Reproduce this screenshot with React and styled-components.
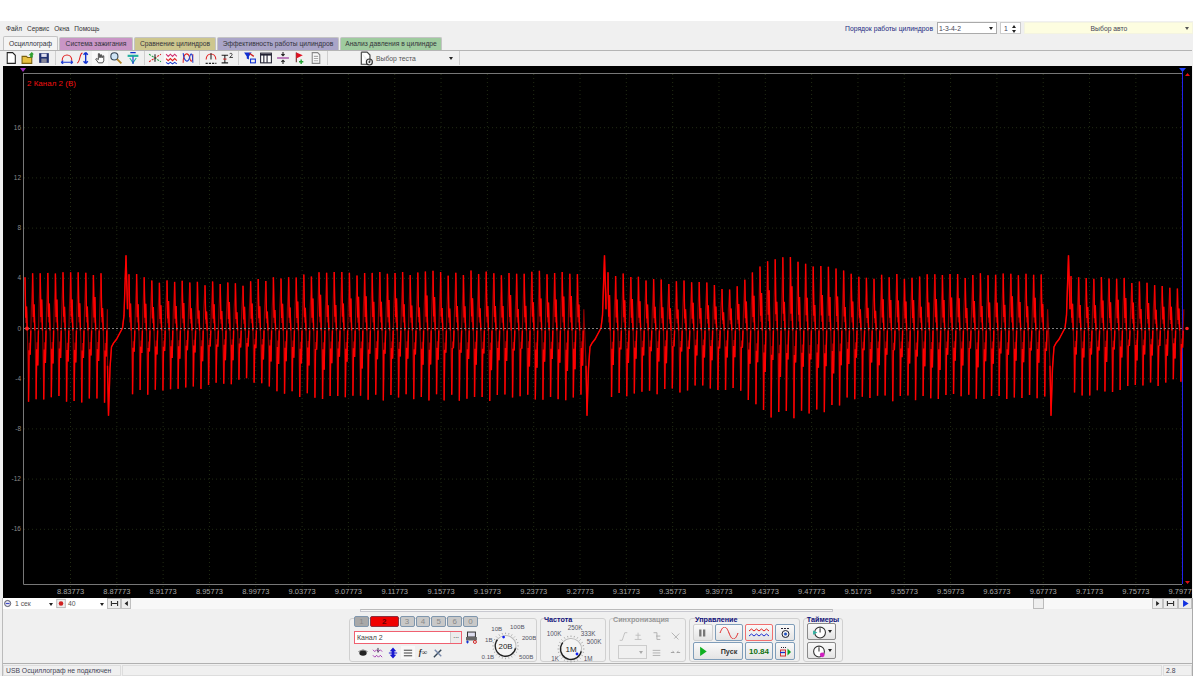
import styled, { createGlobalStyle } from "styled-components";

const GlobalStyle = createGlobalStyle`
  html, body { margin: 0; padding: 0; background: #fff; }
  body { font-family: "Liberation Sans", Arial, sans-serif; font-size: 6.8px; color: #222; overflow: hidden; }
`;

const Shell = styled.div`
  width: 1193px;
  height: 655px;
  margin-top: 21px;
  background: #f0f0f0;
  display: flex;
  flex-direction: column;
`;

const MenuRow = styled.div`
  height: 15px;
  display: flex;
  align-items: center;
  padding-left: 6px;
  gap: 5px;
`;

const MenuItem = styled.span`
  color: #333;
  font-size: 6.5px;
`;

const RightTools = styled.div`
  margin-left: auto;
  display: flex;
  align-items: center;
  gap: 3px;
  height: 13px;
`;

const OrderLabel = styled.span`
  color: #1a2a80;
  font-size: 6.8px;
  margin-right: 1px;
`;

const FieldBox = styled.div`
  width: ${(p) => p.$w}px;
  height: ${(p) => p.$h || 12}px;
  box-sizing: border-box;
  background: ${(p) => p.$bg || "#fff"};
  border: 1px solid ${(p) => p.$line || "#aaa"};
  display: flex;
  align-items: center;
  justify-content: ${(p) => (p.$center ? "center" : "flex-start")};
  position: relative;
  padding-left: 1px;
  font-size: 6.8px;
  color: #445;
`;

const DropArrow = styled.i`
  position: absolute;
  right: 3px;
  top: 50%;
  margin-top: -1px;
  border-left: 2px solid transparent;
  border-right: 2px solid transparent;
  border-top: 3px solid ${(p) => p.$c || "#222"};
`;

const SpinArrows = styled.i`
  position: absolute;
  right: 4px;
  top: 2px;
  width: 0;
  height: 0;
  border-left: 2px solid transparent;
  border-right: 2px solid transparent;
  border-bottom: 3px solid #222;
  &::after {
    content: "";
    position: absolute;
    left: -2px;
    top: 5px;
    border-left: 2px solid transparent;
    border-right: 2px solid transparent;
    border-top: 3px solid #222;
  }
`;

const TabRow = styled.div`
  height: 14px;
  display: flex;
  padding-left: 3px;
  align-items: flex-end;
`;

const Tab = styled.div`
  width: ${(p) => p.$w}px;
  height: ${(p) => (p.$active ? 14 : 13)}px;
  box-sizing: border-box;
  background: ${(p) => p.$bg};
  border: 1px solid #c4c4c4;
  border-bottom: 0;
  border-radius: 2px 2px 0 0;
  margin-right: 1px;
  display: flex;
  align-items: center;
  justify-content: center;
  color: #33333a;
  font-size: 6.7px;
  white-space: nowrap;
`;

const ToolRow = styled.div`
  height: 16px;
  border-top: 1px solid #b4b4b4;
  display: flex;
  align-items: center;
  padding-left: 3px;
  width: 1189px;
`;

const ToolBtn = styled.div`
  width: 16.5px;
  height: 15px;
  display: flex;
  align-items: center;
  justify-content: center;
  flex: none;
  background: ${(p) => (p.$on ? "#f9f9f9" : "transparent")};
`;

const ToolSep = styled.div`
  width: 1px;
  height: 14px;
  background: #cfcfcf;
  margin: 0 2.5px;
  flex: none;
`;

const TestPick = styled.div`
  width: 126px;
  display: flex;
  align-items: center;
  position: relative;
  padding-left: 29px;
  box-sizing: border-box;
  color: #555;
  font-size: 6.8px;
  gap: 2px;
`;

const ChartWrap = styled.div`
  margin-left: 3px;
  width: 1189px;
  height: 532px;
  background: #000;
  flex: none;
  svg { display: block; }
`;

const Lower = styled.div`
  margin-left: 2px;
  width: 1191px;
  box-sizing: border-box;
  border-left: 1px solid #bbb;
  border-right: 1px solid #aaa;
  display: flex;
  flex-direction: column;
  flex: 1;
`;

const ScrollRow = styled.div`
  height: 11px;
  display: flex;
  background: #f8f8f8;
  align-items: stretch;
`;

const TimeField = styled.div`
  width: ${(p) => p.$w}px;
  background: #fff;
  display: flex;
  align-items: center;
  gap: 2px;
  position: relative;
  font-size: 6.8px;
  color: #555;
  flex: none;
`;

const ScrollBtn = styled.div`
  width: ${(p) => p.$w}px;
  flex: none;
  background: #ececec;
  border: 1px solid #c0c0c0;
  box-sizing: border-box;
  display: flex;
  align-items: center;
  justify-content: center;
`;

const ScrollTrack = styled.div`
  flex: 1;
  display: flex;
  justify-content: flex-end;
  padding-right: 108px;
`;

const ScrollThumb = styled.div`
  width: 11px;
  height: 11px;
  background: #eee;
  border: 1px solid #bbb;
  box-sizing: border-box;
`;

const ControlArea = styled.div`
  height: 54px;
  border-bottom: 1px solid #b0b0b0;
  padding-left: 346px;
  display: flex;
  flex-direction: column;
`;

const MiniTrack = styled.div`
  width: 473px;
  height: 3px;
  margin-left: 11px;
  background: #f7f7f7;
  border: 1px solid #c8c8d0;
  border-top: 1px solid #bbb;
  box-sizing: border-box;
  flex: none;
`;

const Groups = styled.div`
  margin-top: 6px;
  display: flex;
  gap: 3px;
  align-items: flex-start;
`;

const Group = styled.div`
  width: ${(p) => p.$w}px;
  height: 44px;
  box-sizing: border-box;
  border: 1px solid #d0d0d0;
  border-radius: 3px;
  flex: none;
  padding: ${(p) => p.$pad || "0 2px"};
  position: relative;
`;

const GroupTitle = styled.div`
  color: ${(p) => (p.$off ? "#999" : "#10107a")};
  font-weight: bold;
  font-size: 7.2px;
  height: 7px;
  line-height: 7px;
  margin-top: -3px;
  margin-left: ${(p) => p.$indent || 0}px;
  white-space: nowrap;
  text-align: ${(p) => (p.$mid ? "center" : "left")};
`;

const ChannelLayout = styled.div`
  display: flex;
  gap: 2px;
`;

const ChannelLeft = styled.div`
  width: 124px;
  display: flex;
  flex-direction: column;
  margin-left: 4px;
`;

const ChannelTabs = styled.div`
  display: flex;
  margin-top: -3px;
  gap: 1px;
`;

const ChTab = styled.div`
  width: ${(p) => p.$w || 15}px;
  height: 11px;
  box-sizing: border-box;
  border: 1px solid ${(p) => (p.$active ? "#8a3040" : "#7f96ad")};
  border-radius: 2px;
  background: ${(p) => (p.$active ? "#f00000" : p.$first ? "#a8a8a8" : "#c8c8c8")};
  color: ${(p) => (p.$active ? "#600" : "#888")};
  font-size: 8px;
  font-weight: ${(p) => (p.$active ? "bold" : "normal")};
  display: flex;
  align-items: center;
  justify-content: center;
`;

const ChannelName = styled.div`
  display: flex;
  align-items: center;
  margin-top: 4px;
  gap: 3px;
`;

const NameField = styled.div`
  width: 109px;
  height: 13px;
  box-sizing: border-box;
  background: #fff;
  border: 1px solid #f06070;
  display: flex;
  align-items: center;
  justify-content: space-between;
  padding-left: 2px;
  color: #444;
  font-size: 7px;
`;

const DotsBtn = styled.span`
  width: 10px;
  height: 11px;
  background: #ececec;
  border-left: 1px solid #ccc;
  text-align: center;
  line-height: 8px;
  color: #222;
`;

const IconRow = styled.div`
  display: flex;
  margin-top: 2px;
  margin-left: 2px;
  gap: 1px;
`;

const IconCell = styled.div`
  width: 14px;
  height: 13px;
  display: flex;
  align-items: center;
  justify-content: center;
  background: ${(p) => (p.$on ? "#f8f8f8" : "transparent")};
`;

const FxMark = styled.b`
  font-style: italic;
  font-family: "Liberation Serif", serif;
  font-size: 8px;
`;

const SyncGrid = styled.div`
  display: grid;
  grid-template-columns: 15px 15px 20px 18px;
  grid-auto-rows: 16px;
  align-items: center;
  justify-items: center;
  margin: 5px 0 0 3px;
`;

const SyncSelect = styled.div`
  grid-column: span 2;
  justify-self: start;
  margin-left: 2px;
  width: 29px;
  height: 14px;
  box-sizing: border-box;
  border: 1px solid #ccc;
  position: relative;
`;

const CtrlGrid = styled.div`
  display: grid;
  grid-template-columns: 20px 28px 28px 20px;
  grid-template-rows: 17px 18px;
  column-gap: 2px;
  row-gap: 1px;
  margin: 1px 0 0 1px;
`;

const PushBtn = styled.div`
  box-sizing: border-box;
  border: 1px solid ${(p) => p.$line || "#7f9db9"};
  border-radius: 2px;
  background: linear-gradient(#fafafa, #e4e4e4);
  display: flex;
  align-items: center;
  justify-content: center;
  grid-column: ${(p) => (p.$span ? `span ${p.$span}` : "auto")};
  font-weight: bold;
  font-size: ${(p) => p.$fs || 7.2}px;
  color: ${(p) => p.$c || "#333"};
  gap: ${(p) => p.$gap || 0}px;
`;

const TimerStack = styled.div`
  display: flex;
  flex-direction: column;
  gap: 2px;
  margin: 0 0 0 3px;
`;

const TimerBtn = styled(PushBtn)`
  width: 29px;
  height: 17px;
  gap: 2px;
  border-color: #8a8a8a;
`;

const TimerArrow = styled.i`
  border-left: 2px solid transparent;
  border-right: 2px solid transparent;
  border-top: 3px solid #222;
`;

const StatusBar = styled.div`
  height: 11px;
  display: flex;
  margin-top: 1px;
  gap: 1px;
  font-size: 6.8px;
  color: #445;
`;

const StatusCell = styled.div`
  width: ${(p) => p.$w}px;
  flex: ${(p) => (p.$w ? "none" : 1)};
  border: 1px solid #ddd;
  box-sizing: border-box;
  display: flex;
  align-items: center;
  padding-left: 2px;
`;

// --- waveform ---
const topEnv = [[23,4.3],[105,4.3],[130,4.3],[160,3.7],[200,3.6],[240,3.5],[270,4],[300,4.3],[400,4.4],[590,4.4],[610,4.4],[650,3.8],[700,3.6],[735,3.1],[750,4.2],[770,5.4],[800,5.5],[830,4.8],[860,4.1],[950,4.2],[1060,4.4],[1075,4.3],[1130,3.8],[1182,3]];
const botEnv = [[23,-5.7],[105,-5.8],[130,-5.3],[160,-5],[200,-4.7],[240,-4.2],[270,-4.8],[300,-5.5],[400,-5.6],[590,-5.6],[610,-5.4],[650,-5.2],[700,-4.8],[735,-5],[750,-6.3],[770,-7],[810,-7],[840,-5.8],[950,-5.5],[1050,-5.6],[1075,-5.4],[1130,-4.7],[1182,-4.2]];
const lerp = (env, x) => {
  for (let i = 1; i < env.length; i++) {
    if (x <= env[i][0]) {
      const [x0, y0] = env[i - 1];
      const [x1, y1] = env[i];
      return y0 + ((y1 - y0) * (x - x0)) / (x1 - x0);
    }
  }
  return env[env.length - 1][1];
};
const Y = (v) => 329 - v * 12.55;

function buildWave() {
  let seed = 7;
  const rnd = () => {
    seed = (seed * 16807) % 2147483647;
    return seed / 2147483647;
  };
  const dim = [];
  const bright = [];
  const runs = [
    [25, 106],
    [129, 584],
    [608, 1048],
    [1071, 1181],
  ];
  const syncs = [
    [106, 108.5],
    [584, 587],
    [1048, 1051],
  ];
  runs.forEach(([a, b], r) => {
    let x = a;
    while (x < b) {
      const p = 7.6;
      const T = lerp(topEnv, x) * (0.94 + rnd() * 0.1);
      const B = lerp(botEnv, x) * (0.94 + rnd() * 0.1);
      const m = 0.35 + rnd() * 0.25;
      const n = 0.3 + rnd() * 0.3;
      const pts = [
        [x, T],
        [x + 0.8, T * 0.1],
        [x + 1.5, T * m],
        [x + 2.6, -1],
        [x + 3.6, B],
        [x + 4.4, B * 0.2],
        [x + 5.2, B * n],
        [x + 6.4, 1.5],
      ];
      dim.push(...pts);
      bright.push(`M${x} ${Y(T)}L${x + 0.7} ${Y(T * 0.2)}`);
      bright.push(`M${x + 1.5} ${Y(T * m)}L${x + 2.2} ${Y(-0.2)}`);
      bright.push(`M${x + 3.5} ${Y(B)}L${x + 4} ${Y(B * 0.3)}`);
      bright.push(`M${x + 5.2} ${Y(B * n)}L${x + 5.8} ${Y(-0.2)}`);
      x += p;
    }
    if (syncs[r]) {
      const s = syncs[r][1];
      const tail = [[s - 1, -3],[s, -7],[s + 1.5, -3.2],[s + 3, -1.5],[s + 5, -1.2],[s + 8, -0.9],[s + 10, -0.6],[s + 12, -0.3],[s + 14, 0],[s + 15.5, 1],[s + 17.5, 5.8],[s + 19, 1.5]];
      dim.push(...tail);
      bright.push("M" + tail.map(([px, v]) => `${px} ${Y(v)}`).join("L"));
    }
  });
  return {
    dim: dim.map(([x, v]) => `${x.toFixed(1)},${Y(v).toFixed(1)}`).join(" "),
    bright: bright.join(""),
  };
}
const wave = buildWave();

const yTicks = [16, 12, 8, 4, 0, -4, -8, -12, -16];
const xTicks = Array.from({ length: 25 }, (_, i) => i);

function Scope() {
  return (
    <svg width="1189" height="532" viewBox="3 67 1189 532">
      {xTicks.map((i) => (
        <line key={i} x1={70.5 + i * 46.32} x2={70.5 + i * 46.32} y1="75" y2="589" stroke="#222c14" strokeDasharray="1 3" />
      ))}
      {yTicks.filter((v) => v !== 0).map((v) => (
        <line key={v} x1="24" x2="1182" y1={Y(v) + 0.5} y2={Y(v) + 0.5} stroke="#222c14" strokeDasharray="1 3" />
      ))}
      <path d="M23.5 74V585.5H1182M23.5 74.5H1182" fill="none" stroke="#777" />
      <path d="M1182.5 72V585" stroke="#2222ee" fill="none" />
      <path d="M20 69h6l-3 4z" fill="#a030c0" />
      <path d="M1179 69h7l-3.5 4z" fill="#2040ff" />
      <path d="M1185 77h5l-2.5-3zM1185 582h5l-2.5 3z" fill="#e01010" />
      <polyline points={wave.dim} fill="none" stroke="#8c0000" strokeWidth="1.2" />
      <path d={wave.bright} fill="none" stroke="#ff0000" strokeWidth="1.4" />
      <line x1="24" x2="1182" y1="329.5" y2="329.5" stroke="#808080" strokeDasharray="2 2" />
      <circle cx="27" cy="329.5" r="2" fill="#ff2020" />
      <circle cx="1187" cy="329.5" r="1.8" fill="#ff2020" />
      <text x="27" y="87" fill="#f01010" fontSize="8" fontFamily="Liberation Sans">2 Канал 2 (В)</text>
      {yTicks.map((v) => (
        <text key={v} x="21" y={Y(v) + 2.5} textAnchor="end" fill="#8a8a8a" fontSize="6.5" fontFamily="Liberation Sans">{v}</text>
      ))}
      {xTicks.map((i) => (
        <text key={i} x={70.5 + i * 46.32} y="595" textAnchor="middle" fill="#a8a8a8" fontSize="7.5" fontFamily="Liberation Sans">
          {(8.83773 + i * 0.04).toFixed(5)}
        </text>
      ))}
    </svg>
  );
}

const Ic = ({ w = 14, h = 14, children }) => (
  <svg width={w} height={h} viewBox="0 0 13 13" fill="none">{children}</svg>
);

const toolIcons = {
  doc: <path d="M3 1.5h5l2.5 2.5v7.5H3z" fill="#fff" stroke="#222" />,
  open: <><path d="M1 5h4l1 1h4v5.5H1z" fill="#e8c040" stroke="#7a6010" /><path d="M7 4l3-3 2 2-1 .3V6H8.5V4z" fill="#30a030" /></>,
  save: <><rect x="2" y="2" width="9" height="9" fill="#203070" /><rect x="4" y="2.5" width="5" height="3" fill="#dde" /><rect x="4" y="7" width="5" height="4" fill="#889" /></>,
  arch: <><path d="M2 9C2 2 11 2 11 9" stroke="#e02020" /><path d="M1 10.5h11M1 10.5l2-1.5M1 10.5l2 1.5M12 10.5l-2-1.5M12 10.5l-2 1.5" stroke="#1030d0" /></>,
  curve: <><path d="M1 11C4 11 3 2 6 2" stroke="#e02020" /><path d="M9 1.5v10M9 1.5l-2 2M9 1.5l2 2M9 11.5l-2-2M9 11.5l2-2" stroke="#1030d0" strokeWidth="1.3" /></>,
  hand: <path d="M5 11L2.5 7.5l1-.5L5 8V2.5h1V6h1V3.5h1V6h1V4.5h1V9l-1 2z" fill="#fff" stroke="#333" strokeWidth=".8" />,
  zoom: <><circle cx="5" cy="5" r="3.3" fill="#cfe4f5" stroke="#345" /><path d="M7.5 7.5L11.5 11.5" stroke="#b08020" strokeWidth="1.6" /></>,
  teal: <><path d="M1.5 3.5h10v2h-10z" fill="#20b0a0" /><path d="M3.5 6.5L6.5 11 9.5 6.5" stroke="#20b0a0" /><path d="M6.5 5v7M4 1.5h5" stroke="#1030d0" /></>,
  cross: <><path d="M1 10L12 3" stroke="#e02020" strokeDasharray="2 1" /><path d="M1 3L12 10" stroke="#20a040" strokeDasharray="2 1" /><path d="M6.5 3v7" stroke="#222" /></>,
  waves: <><path d="M1 3l2 2 2-2 2 2 2-2 2 2" stroke="#d03070" /><path d="M1 7l2 2 2-2 2 2 2-2 2 2" stroke="#e02020" /><path d="M1 10.5l2 1.5 2-1.5 2 1.5 2-1.5 2 1.5" stroke="#2040d0" /></>,
  loops: <><path d="M2 11C2 1 7 1 8 6s3 5 3-3" stroke="#e02020" /><path d="M2 2c1 9 5 9 6 4s3-5 3 5" stroke="#2040d0" /></>,
  auto: <><path d="M2 8C2 1 11 1 11 8" stroke="#e02020" /><path d="M6.5 2v6" stroke="#222" /><path d="M1.5 11.5h10" stroke="#222" strokeDasharray="2 1" /></>,
  beam: <><path d="M1.5 4h6M1.5 11h6M4.5 4v7" stroke="#222" /><path d="M9 2.5c2-1 3 .5 1.5 2L9 6h3" stroke="#222" strokeWidth=".8" /><path d="M3 7.5h3" stroke="#d02020" /></>,
  funnel: <><path d="M1 1.5h7L5.5 5v3L3.5 7V5z" fill="#1030d0" /><path d="M6 2l4 3" stroke="#d02020" strokeWidth="1.2" /><rect x="7" y="7.5" width="4.5" height="3.5" stroke="#1030d0" /></>,
  table: <><rect x="1.5" y="2" width="10" height="9" fill="#fff" stroke="#223" /><path d="M1.5 3.5h10" stroke="#223" strokeWidth="1.5" /><path d="M4.5 3v8M7.5 3v8" stroke="#223" /></>,
  split: <><path d="M1 6.5h11" stroke="#902090" /><path d="M6.5 1v3.5M5 3l1.5 1.5L8 3M6.5 12V8.5M5 10l1.5-1.5L8 10" stroke="#222" /></>,
  flag: <><path d="M4 1.5v9" stroke="#622" /><path d="M4 1.5L10 4 4 7z" fill="#e01020" /><path d="M8.5 8v4M6.5 10h4" stroke="#20a030" strokeWidth="1.3" /></>,
  sheet: <><path d="M3 1.5h5l2 2v8H3z" fill="#f8f8f8" stroke="#888" /><path d="M4.5 5h4M4.5 7h4M4.5 9h4" stroke="#aaa" /></>,
};

const toolGroups = [
  ["doc", "open", "save"],
  ["arch", "curve", "hand", "zoom", "teal"],
  ["cross", "waves", "loops"],
  ["auto", "beam"],
  ["funnel", "table", "split", "flag", "sheet"],
];

const tabs = [
  ["Осциллограф", 55, "#f4f4f4", true],
  ["Система зажигания", 74, "#c996c6"],
  ["Сравнение цилиндров", 82, "#cdc68e"],
  ["Эффективность работы цилиндров", 122, "#aaa5c8"],
  ["Анализ давления в цилиндре", 102, "#9fcb9f"],
];

function Knob({ box, cx, cy, value, labels, dot }) {
  const ticks = Array.from({ length: 24 }, (_, i) => (i * Math.PI * 2) / 24);
  return (
    <svg width={box[2]} height={box[3]} viewBox={box.join(" ")}>
      <circle cx={cx} cy={cy} r="10.5" fill="#f4f4f4" stroke="#222" strokeWidth="1.4" strokeDasharray="38 28" transform={`rotate(10 ${cx} ${cy})`} />
      <circle cx={cx} cy={cy} r="10.5" fill="none" stroke="#bbb" strokeDasharray="28 38" transform={`rotate(220 ${cx} ${cy})`} />
      {ticks.map((a, i) => (
        <line key={i} x1={cx + Math.cos(a) * 12} y1={cy + Math.sin(a) * 12} x2={cx + Math.cos(a) * 13.5} y2={cy + Math.sin(a) * 13.5} stroke="#aaa" />
      ))}
      <circle cx={dot[0]} cy={dot[1]} r="1.4" fill="#1020f0" />
      <text x={cx} y={cy + 3} textAnchor="middle" fontSize="8" fill="#222" fontFamily="Liberation Sans">{value}</text>
      {labels.map(([t, x, y]) => (
        <text key={t} x={x} y={y} textAnchor="middle" fontSize="6.3" fill="#556" fontFamily="Liberation Sans">{t}</text>
      ))}
    </svg>
  );
}

const channelIcons = [
  <><ellipse cx="6.5" cy="6.5" rx="4" ry="3" fill="#222" /><path d="M1.5 5l5-2 5 2" stroke="#777" /></>,
  <><path d="M1 3l2 2 2-2 2 2 2-2 2 2M1 9l2 2 2-2 2 2 2-2 2 2" stroke="#a030b0" /><path d="M6.5 1v5" stroke="#223" /></>,
  <path d="M6.5 .5L10 4.5H8V6h3v1H8v1.5h2L6.5 12.5 3 8.5h2V7H2V6h3V4.5H3z" fill="#1818d0" />,
  <path d="M2 3.5h9M2 6.5h9M2 9.5h9" stroke="#333" />,
  null,
  <><path d="M2 11l8-8" stroke="#345" strokeWidth="1.5" /><path d="M3 3l7 7" stroke="#78a" strokeWidth="1.5" /></>,
];

export default function App() {
  return (
    <>
      <GlobalStyle />
      <Shell>
        <MenuRow>
          <MenuItem>Файл</MenuItem>
          <MenuItem>Сервис</MenuItem>
          <MenuItem>Окна</MenuItem>
          <MenuItem>Помощь</MenuItem>
          <RightTools>
            <OrderLabel>Порядок работы цилиндров</OrderLabel>
            <FieldBox $w={60}>1-3-4-2<DropArrow /></FieldBox>
            <FieldBox $w={21} $line="#ccc">&nbsp;1<SpinArrows /></FieldBox>
            <FieldBox $w={169} $bg="#fdfde0" $line="#f4f4e0" $center>Выбор авто<DropArrow $c="#555" /></FieldBox>
          </RightTools>
        </MenuRow>
        <TabRow>
          {tabs.map(([label, w, bg, active]) => (
            <Tab key={label} $w={w} $bg={bg} $active={active}>{label}</Tab>
          ))}
        </TabRow>
        <ToolRow>
          {toolGroups.map((group, i) => (
            <div key={i} style={{ display: "contents" }}>
              {group.map((name) => (
                <ToolBtn key={name} $on={name === "hand" || name === "waves"}>
                  <Ic>{toolIcons[name]}</Ic>
                </ToolBtn>
              ))}
              <ToolSep />
            </div>
          ))}
          <TestPick>
            <Ic w={15} h={15}>
              <path d="M2 1h5l2.5 2.5V9M2 1v10.5h5" stroke="#444" fill="#fff" />
              <circle cx="9" cy="9.5" r="2.6" stroke="#333" />
              <circle cx="9" cy="9.5" r=".8" fill="#333" />
            </Ic>
            Выбор теста
            <DropArrow />
          </TestPick>
          <ToolSep />
        </ToolRow>
        <ChartWrap>
          <Scope />
        </ChartWrap>
        <Lower>
          <ScrollRow>
            <TimeField $w={53}>
              <Ic w={10} h={11}><circle cx="6" cy="6.5" r="4" fill="#dde" stroke="#334" /><path d="M3.5 6.5h5" stroke="#1020c0" /></Ic>
              1 сек
              <DropArrow />
            </TimeField>
            <TimeField $w={51}>
              <Ic w={10} h={11}><rect x="1" y="1" width="11" height="11" fill="#eee" stroke="#aaa" /><circle cx="6.5" cy="6.5" r="3" fill="#d02020" /></Ic>
              40
              <DropArrow />
            </TimeField>
            <ScrollBtn $w={14}><Ic w={9} h={9}><path d="M2 3v7M11 3v7M3 6.5h7" stroke="#222" strokeWidth="1.5" /></Ic></ScrollBtn>
            <ScrollBtn $w={10}><Ic w={7} h={7}><path d="M9 2v9L3 6.5z" fill="#222" /></Ic></ScrollBtn>
            <ScrollTrack>
              <ScrollThumb />
            </ScrollTrack>
            <ScrollBtn $w={11}><Ic w={7} h={7}><path d="M4 2v9l6-4.5z" fill="#222" /></Ic></ScrollBtn>
            <ScrollBtn $w={15}><Ic w={9} h={9}><path d="M2 3v7M11 3v7M3 6.5h7" stroke="#222" strokeWidth="1.5" /></Ic></ScrollBtn>
            <ScrollBtn $w={14}><Ic w={9} h={9}><path d="M3 1.5v10L11 6.5z" fill="#1030e0" /></Ic></ScrollBtn>
          </ScrollRow>
          <ControlArea>
            <MiniTrack />
            <Groups>
              <Group $w={188} $pad="0">
                <ChannelLayout>
                  <ChannelLeft>
                    <ChannelTabs>
                      <ChTab $first>1</ChTab>
                      <ChTab $active $w={29}>2</ChTab>
                      <ChTab>3</ChTab>
                      <ChTab>4</ChTab>
                      <ChTab>5</ChTab>
                      <ChTab>6</ChTab>
                      <ChTab>0</ChTab>
                    </ChannelTabs>
                    <ChannelName>
                      <NameField>
                        Канал 2
                        <DotsBtn>...</DotsBtn>
                      </NameField>
                      <Ic w={13} h={13}>
                        <rect x="2.5" y="1" width="8" height="5" fill="#dde" stroke="#333" />
                        <rect x="1" y="6" width="11" height="3.5" fill="#666" />
                        <path d="M1 11h3M2.5 9.5v3" stroke="#1030d0" />
                        <circle cx="10" cy="11" r="1.5" stroke="#d02020" />
                      </Ic>
                    </ChannelName>
                    <IconRow>
                      {channelIcons.map((d, i) => (
                        <IconCell key={i} $on={i === 3}>
                          {d ? <Ic w={12} h={12}>{d}</Ic> : <FxMark>f∞</FxMark>}
                        </IconCell>
                      ))}
                    </IconRow>
                  </ChannelLeft>
                  <Knob
                    box={[480, 620, 57, 43]}
                    cx={506}
                    cy={647}
                    value="20В"
                    dot={[504, 638]}
                    labels={[["10В", 497, 632], ["100В", 518, 630], ["200В", 530, 641], ["1В", 489, 643], ["0.1В", 488, 660], ["500В", 527, 660]]}
                  />
                </ChannelLayout>
              </Group>
              <Group $w={66} $pad="0">
                <GroupTitle $indent={3}>Частота</GroupTitle>
                <Knob
                  box={[542, 622, 63, 40]}
                  cx={572}
                  cy={648}
                  value="1M"
                  dot={[578, 653]}
                  labels={[["250K", 576, 629], ["100K", 555, 635], ["333K", 589, 635], ["500K", 595, 643], ["1K", 556, 660], ["1M", 589, 660]]}
                />
              </Group>
              <Group $w={77} $pad="0 0 0 3px">
                <GroupTitle $off>Синхронизация</GroupTitle>
                <SyncGrid>
                  <Ic w={11} h={11}><path d="M2 11h3l3-9h3" stroke="#bbb" /></Ic>
                  <Ic w={11} h={11}><path d="M2 10h8M6 2v8M3 5h6" stroke="#bbb" /></Ic>
                  <Ic w={11} h={11}><path d="M3 2h4v8h4M6 6h5" stroke="#aaa" /></Ic>
                  <Ic w={11} h={11}><path d="M2 2l8 8M5 9l6-6" stroke="#aaa" /></Ic>
                  <SyncSelect><DropArrow $c="#aaa" /></SyncSelect>
                  <Ic w={11} h={11}><path d="M2 4h9M2 7h9M2 10h9" stroke="#aaa" /></Ic>
                  <Ic w={11} h={11}><path d="M1 6.5h4M8 6.5h4M5 6.5L3 5M8 6.5L10 5" stroke="#999" /></Ic>
                </SyncGrid>
              </Group>
              <Group $w={111} $pad="0 0 0 2px">
                <GroupTitle $indent={3}>Управление</GroupTitle>
                <CtrlGrid>
                  <PushBtn $line="#d0d0d0">
                    <Ic w={10} h={12}><path d="M3 2v9M8 2v9" stroke="#777" strokeWidth="3" /></Ic>
                  </PushBtn>
                  <PushBtn>
                    <svg width="20" height="12" viewBox="0 0 20 12" fill="none"><path d="M1 6C4-2 7-2 10 6s6 8 9 0" stroke="#e02020" /></svg>
                  </PushBtn>
                  <PushBtn $line="#f07070">
                    <svg width="22" height="12" viewBox="0 0 22 12" fill="none"><path d="M1 4l2.5-2 2.5 2 2.5-2 2.5 2 2.5-2 2.5 2 2.500-2 2.5 2" stroke="#e02020" /><path d="M1 9l2.5-2 2.5 2 2.5-2 2.5 2 2.5-2 2.5 2 2.5-2 2.5 2" stroke="#2030d0" /></svg>
                  </PushBtn>
                  <PushBtn>
                    <Ic w={13} h={13}><circle cx="6.5" cy="8" r="3.5" stroke="#223" /><circle cx="6.5" cy="8" r="1.5" fill="#2050c0" /><path d="M2 2.5h9" stroke="#223" strokeDasharray="2 1" /></Ic>
                  </PushBtn>
                  <PushBtn $span={2} $gap={12}>
                    <Ic w={10} h={14}><path d="M1.5 1v12L10 7z" fill="#10b020" /></Ic>
                    Пуск
                  </PushBtn>
                  <PushBtn $c="#107010" $fs={8}>10.84</PushBtn>
                  <PushBtn>
                    <Ic w={13} h={13}><path d="M2 2.5h5" stroke="#223" strokeDasharray="1 1" /><rect x="1.5" y="5" width="5" height="6" stroke="#d03030" /><path d="M1 7.5h5" stroke="#1030d0" strokeWidth="1.3" /><path d="M8.5 3.5v7L12 7z" fill="#10a020" /></Ic>
                  </PushBtn>
                </CtrlGrid>
              </Group>
              <Group $w={40} $pad="0">
                <GroupTitle $mid>Таймеры</GroupTitle>
                <TimerStack>
                  <TimerBtn>
                    <Ic w={14} h={14}><circle cx="7.5" cy="7" r="5" fill="#fff" stroke="#333" /><path d="M7.5 7V3" stroke="#333" /><path d="M1 5l4 2-4 2z" fill="#30b0a0" /></Ic>
                    <TimerArrow />
                  </TimerBtn>
                  <TimerBtn>
                    <Ic w={14} h={14}><circle cx="6.5" cy="7" r="5" fill="#fff" stroke="#333" /><path d="M6.5 7V3" stroke="#333" /><circle cx="9.5" cy="10" r="2.2" fill="#d020c0" /></Ic>
                    <TimerArrow />
                  </TimerBtn>
                </TimerStack>
              </Group>
            </Groups>
          </ControlArea>
          <StatusBar>
            <StatusCell $w={118}>USB Осциллограф не подключен</StatusCell>
            <StatusCell />
            <StatusCell $w={29}>2.8</StatusCell>
          </StatusBar>
        </Lower>
      </Shell>
    </>
  );
}
